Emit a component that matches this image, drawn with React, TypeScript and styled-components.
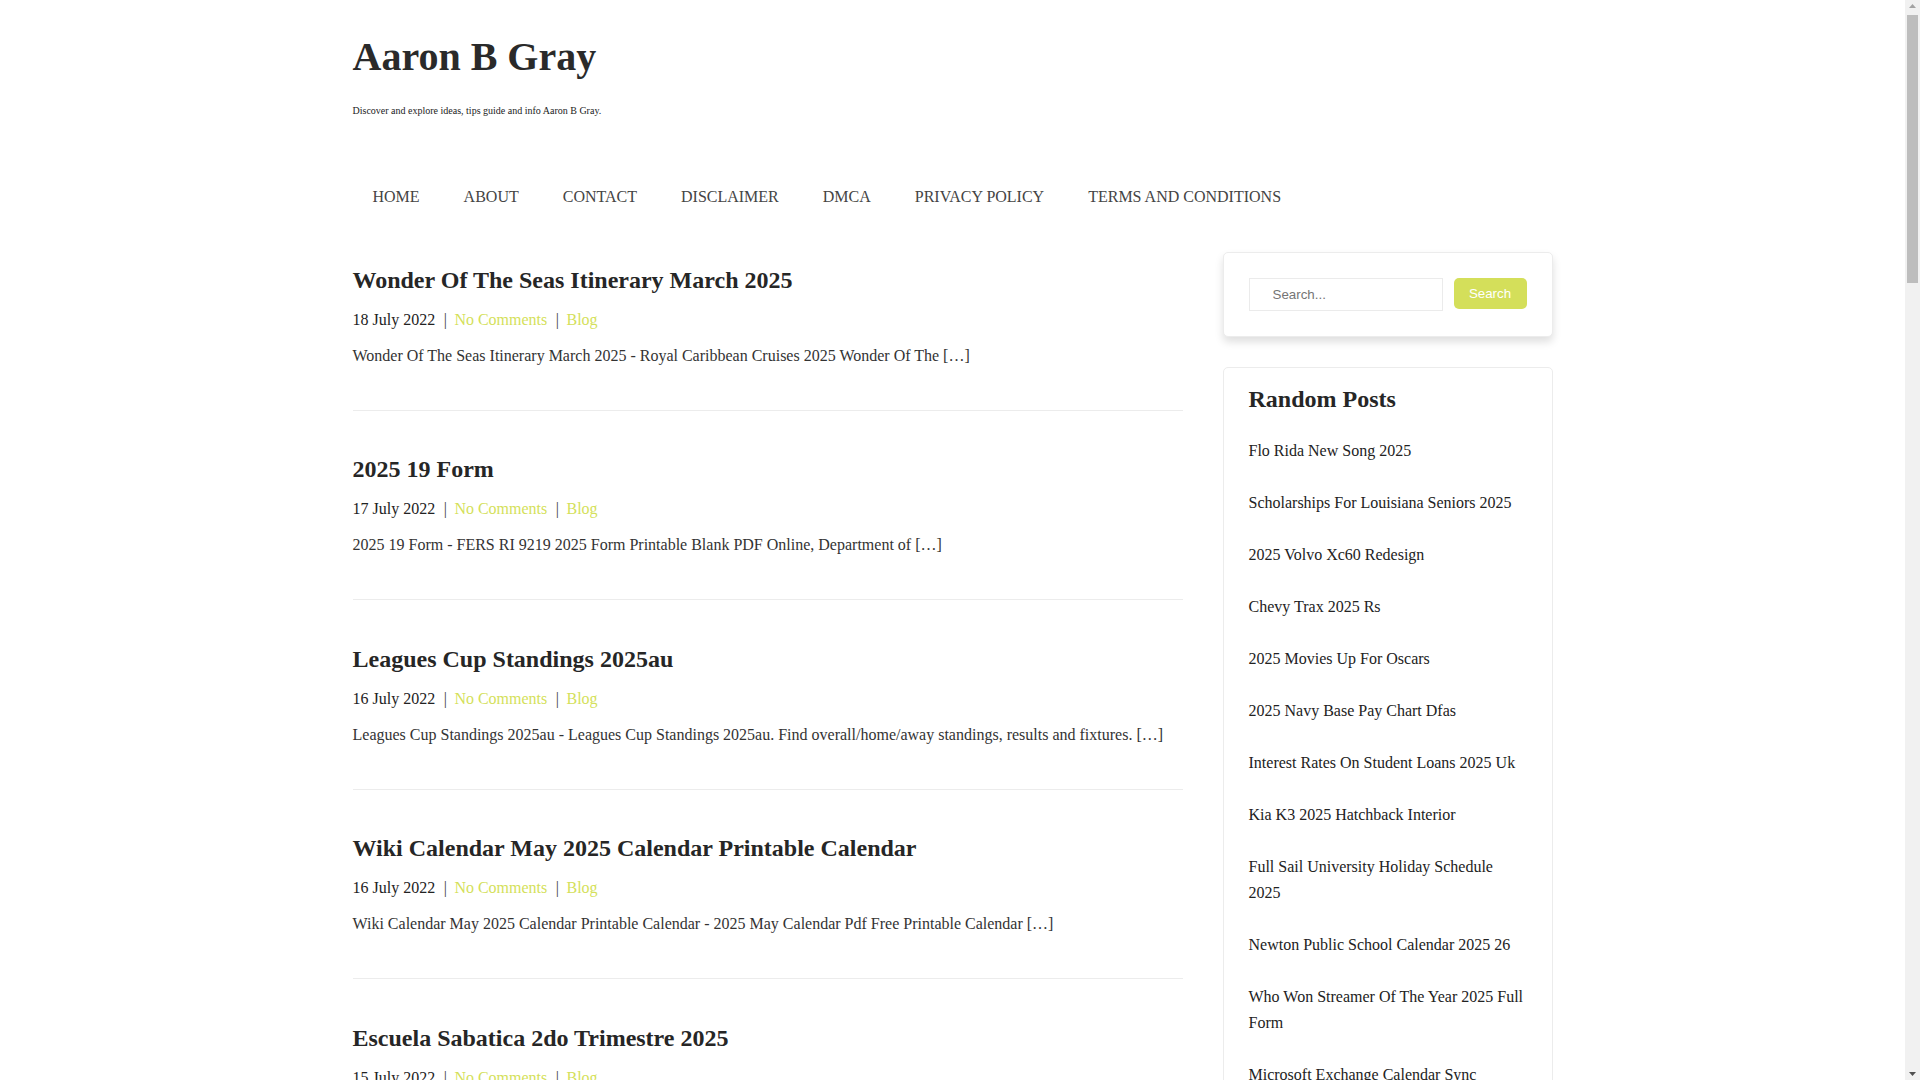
import React from "react";
import styled, { createGlobalStyle } from "styled-components";

const Global = createGlobalStyle`
  html, body { margin: 0; padding: 0; background: #fff; }
  body {
    font-family: "Liberation Serif", "Times New Roman", serif;
    font-size: 16px;
    line-height: 1.6;
    color: #333;
    padding-right: 15px;
  }
  * { box-sizing: border-box; }
`;

const Container = styled.div`
  width: 1200px;
  margin: 0 auto;
`;

const Header = styled.header`
  padding-top: 33px;
`;

const SiteTitle = styled.h1`
  margin: 0;
  font-size: 40px;
  line-height: 48px;
  font-weight: bold;
  color: #2a2a2a;
`;

const Tagline = styled.p`
  margin: 22px 0 0;
  font-size: 10px;
  line-height: 16px;
  color: #222;
`;

const Nav = styled.nav`
  margin-top: 65px;
  display: flex;
  gap: 4px;
`;

const NavItem = styled.a`
  padding: 0 20px;
  font-size: 16px;
  line-height: 25.6px;
  color: #444;
  text-transform: uppercase;
  text-decoration: none;
`;

const Row = styled.div`
  margin-top: 42px;
  display: flex;
  gap: 40px;
  align-items: flex-start;
`;

const Main = styled.main`
  width: 830px;
  flex: none;
`;

const Article = styled.article`
  padding: 14px 0 41px;
  border-bottom: 1px solid #ececec;
  margin-bottom: 30.5px;
`;

const PostTitle = styled.h2`
  margin: 0 0 12.5px;
  font-size: 24px;
  line-height: 28.8px;
  font-weight: bold;
  color: #262626;
`;

const Meta = styled.div`
  font-size: 16px;
  line-height: 25.6px;
  color: #222;
  margin-bottom: 10.5px;
`;

const Sep = styled.span`
  color: #444;
  margin: 0 7.5px 0 8.5px;
`;

const MetaLink = styled.a`
  color: #d4df5a;
  text-decoration: none;
`;

const Excerpt = styled.p`
  margin: 0;
  font-size: 16px;
  line-height: 25.6px;
  color: #333;
`;

const Sidebar = styled.aside`
  width: 330px;
  flex: none;
  display: flex;
  flex-direction: column;
  gap: 30px;
`;

const Card = styled.section<{ $shadow?: boolean; $pad?: string }>`
  border: 1px solid #ececec;
  border-radius: 5px;
  background: #fff;
  padding: ${(p) => p.$pad || "25px"};
  box-shadow: ${(p) => (p.$shadow ? "0 5px 8px rgba(0,0,0,0.13)" : "none")};
`;

const SearchForm = styled.form`
  display: flex;
  align-items: flex-start;
  gap: 11px;
`;

const SearchInput = styled.input`
  width: 194px;
  height: 33px;
  border: 1px solid #ebebeb;
  padding: 0 0 0 23px;
  font-family: "Liberation Sans", Arial, sans-serif;
  font-size: 13.333px;
  color: #333;
  outline: none;
  &::placeholder { color: #757575; }
`;

const SearchButton = styled.button`
  width: 73px;
  height: 31px;
  border: none;
  border-radius: 5px;
  background: #d4df5a;
  color: #fff;
  font-family: "Liberation Sans", Arial, sans-serif;
  font-size: 13.333px;
  padding: 0;
  cursor: pointer;
`;

const WidgetTitle = styled.h3`
  margin: 0;
  font-size: 24px;
  line-height: 24px;
  font-weight: bold;
  color: #262626;
`;

const List = styled.ul`
  list-style: none;
  margin: 14px 0 0;
  padding: 0;
`;

const ListItem = styled.li`
  padding: 13px 0;
  font-size: 16px;
  line-height: 26px;
  a { color: #222; text-decoration: none; }
`;

const ScrollTrack = styled.div`
  position: fixed;
  top: 0;
  right: 0;
  width: 15px;
  height: 100vh;
  background: #f1f1f1;
  display: flex;
  flex-direction: column;
  align-items: center;
  justify-content: space-between;
  padding: 4px 0;
  z-index: 10;
`;

const ScrollThumb = styled.div`
  position: absolute;
  top: 15px;
  left: 2px;
  width: 11px;
  height: 268px;
  background: #bdbdbd;
`;

const navItems = ["Home", "About", "Contact", "Disclaimer", "DMCA", "Privacy Policy", "Terms and Conditions"];

const posts = [
  {
    title: "Wonder Of The Seas Itinerary March 2025",
    date: "18 July 2022",
    excerpt: "Wonder Of The Seas Itinerary March 2025 - Royal Caribbean Cruises 2025 Wonder Of The […]",
  },
  {
    title: "2025 19 Form",
    date: "17 July 2022",
    excerpt: "2025 19 Form - FERS RI 9219 2025 Form Printable Blank PDF Online, Department of […]",
  },
  {
    title: "Leagues Cup Standings 2025au",
    date: "16 July 2022",
    excerpt:
      "Leagues Cup Standings 2025au - Leagues Cup Standings 2025au. Find overall/home/away standings, results and fixtures. […]",
  },
  {
    title: "Wiki Calendar May 2025 Calendar Printable Calendar",
    date: "16 July 2022",
    excerpt:
      "Wiki Calendar May 2025 Calendar Printable Calendar - 2025 May Calendar Pdf Free Printable Calendar […]",
  },
  {
    title: "Escuela Sabatica 2do Trimestre 2025",
    date: "15 July 2022",
    excerpt: "Escuela Sabatica 2do Trimestre 2025 - Lecciones de la Escuela Sabatica para adultos […]",
  },
];

const randomPosts = [
  "Flo Rida New Song 2025",
  "Scholarships For Louisiana Seniors 2025",
  "2025 Volvo Xc60 Redesign",
  "Chevy Trax 2025 Rs",
  "2025 Movies Up For Oscars",
  "2025 Navy Base Pay Chart Dfas",
  "Interest Rates On Student Loans 2025 Uk",
  "Kia K3 2025 Hatchback Interior",
  "Full Sail University Holiday Schedule 2025",
  "Newton Public School Calendar 2025 26",
  "Who Won Streamer Of The Year 2025 Full Form",
  "Microsoft Exchange Calendar Sync Problems",
  "2025 Honda Accord Sport Hybrid",
];

export default function App() {
  return (
    <>
      <Global />
      <Container>
        <Header>
          <SiteTitle>Aaron B Gray</SiteTitle>
          <Tagline>Discover and explore ideas, tips guide and info Aaron B Gray.</Tagline>
        </Header>
        <Nav>
          {navItems.map((n) => (
            <NavItem key={n} href="#">
              {n}
            </NavItem>
          ))}
        </Nav>
        <Row>
          <Main>
            {posts.map((p) => (
              <Article key={p.title}>
                <PostTitle>{p.title}</PostTitle>
                <Meta>
                  {p.date}
                  <Sep>|</Sep>
                  <MetaLink href="#">No Comments</MetaLink>
                  <Sep>|</Sep>
                  <MetaLink href="#">Blog</MetaLink>
                </Meta>
                <Excerpt>{p.excerpt}</Excerpt>
              </Article>
            ))}
          </Main>
          <Sidebar>
            <Card $shadow>
              <SearchForm onSubmit={(e) => e.preventDefault()}>
                <SearchInput type="text" placeholder="Search..." />
                <SearchButton type="submit">Search</SearchButton>
              </SearchForm>
            </Card>
            <Card $pad="19px 25px 25px">
              <WidgetTitle>Random Posts</WidgetTitle>
              <List>
                {randomPosts.map((r) => (
                  <ListItem key={r}>
                    <a href="#">{r}</a>
                  </ListItem>
                ))}
              </List>
            </Card>
          </Sidebar>
        </Row>
      </Container>
      <ScrollTrack aria-hidden="true">
        <svg width="7" height="4" viewBox="0 0 7 4">
          <polygon points="0,4 3.5,0 7,4" fill="#a3a3a3" />
        </svg>
        <ScrollThumb />
        <svg width="7" height="4" viewBox="0 0 7 4">
          <polygon points="0,0 3.5,4 7,0" fill="#505050" />
        </svg>
      </ScrollTrack>
    </>
  );
}
